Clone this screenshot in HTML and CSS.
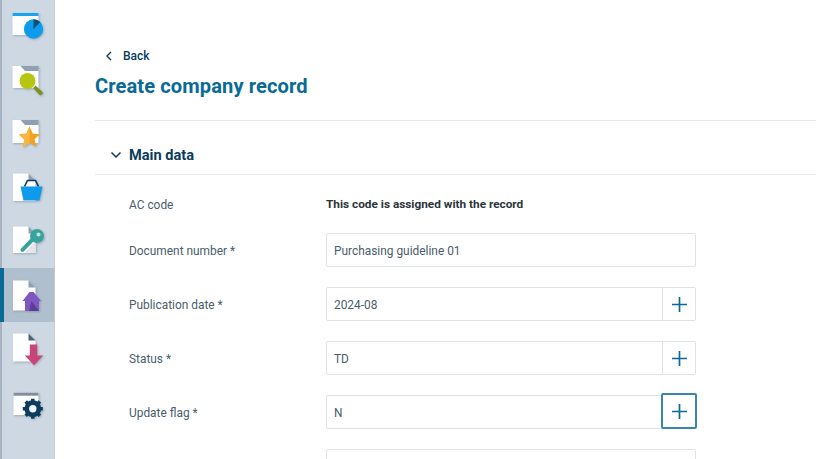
FILE: index.html
```html
<!DOCTYPE html>
<html lang="en">
<head>
<meta charset="utf-8">
<title>Create company record</title>
<link rel="stylesheet" href="styles.css">
</head>
<body>
<div class="app">
  <nav class="rail">
    <a class="rail-item">
      <svg class="ico" viewBox="0 0 36 34">
        <rect x="2.500" y="3" width="26" height="22" fill="#fff"/>
        <rect x="2.500" y="3" width="26" height="3" fill="#1aa3ef"/>
        <circle cx="23.500" cy="19" r="9.700" fill="#0f9bec"/>
        <path d="M23.500 19V9.300a9.700 9.700 0 0 1 6.800 2.800z" fill="#0b4f78"/>
      </svg>
    </a>
    <a class="rail-item">
      <svg class="ico" viewBox="0 0 36 34">
        <path d="M2.500 3h9l3 3h14v19h-26z" fill="#fff"/>
        <path d="M10.500 3h18v5H15z" fill="#8fa1b1"/>
        <path d="M23 25l2.500-2.500 6.500 6a2 2 0 0 1-3 3z" fill="#7d9221"/>
        <circle cx="17.500" cy="18" r="8" fill="#b6c612"/>
      </svg>
    </a>
    <a class="rail-item">
      <svg class="ico" viewBox="0 0 36 34">
        <path d="M2.500 3h9l3 3h14v20h-26z" fill="#fff"/>
        <path d="M10.500 3h18v5H15z" fill="#8fa1b1"/>
        <path d="M19.500 9.500l3.200 7 7.300.7-5.400 5 1.600 7.500-6.700-3.900-6.700 3.900 1.600-7.500-5.400-5 7.300-.7z" fill="#f2a31e"/>
        <path d="M19.500 9.500v16.800l-6.700 3.900 1.600-7.500-5.400-5 7.300-.7z" fill="#f9b642"/>
      </svg>
    </a>
    <a class="rail-item">
      <svg class="ico" viewBox="0 0 36 34">
        <path d="M3 2.500h15.500l7 7v20.500H3z" fill="#fff"/>
        <path d="M18.500 2.500l7 7h-7z" fill="#8fa1b1"/>
        <path d="M14.500 15.500l3-6h8l3 6" stroke="#0b3c5d" stroke-width="1.600" fill="none"/>
        <path d="M10.500 15.500h22l-3 14h-16z" fill="#0f9bec"/>
      </svg>
    </a>
    <a class="rail-item">
      <svg class="ico" viewBox="0 0 36 34">
        <path d="M3 2.500h15.500l7 7v19.500H3z" fill="#fff"/>
        <path d="M14 29L25.500 17v12z" fill="#e3e7ea"/>
        <path d="M18.500 2.500l7 7h-7z" fill="#8fa1b1"/>
        <path d="M12.500 25.800L24 14" stroke="#37a39c" stroke-width="4" stroke-linecap="round"/>
        <circle cx="27" cy="12" r="7" fill="#37a39c"/>
        <circle cx="28.500" cy="10.500" r="2" fill="#bfe2df"/>
      </svg>
    </a>
    <a class="rail-item is-active">
      <svg class="ico" viewBox="0 0 36 34">
        <path d="M3 2.500h15.500l7 7v23H3z" fill="#fff"/>
        <path d="M18.500 2.500l7 7h-7z" fill="#8fa1b1"/>
        <path d="M19.500 14h4l7.500 9h-2v10h-14V23h-2.500z" fill="#7e57c2"/>
        <path d="M21.500 23l7.500 10h-10z" fill="#5b3d96"/>
      </svg>
    </a>
    <a class="rail-item">
      <svg class="ico" viewBox="0 0 36 34">
        <path d="M3 2.500h15.500l7 7v21H3z" fill="#fff"/>
        <path d="M18.500 2.500l7 7h-7z" fill="#4d6478"/>
        <path d="M19.800 13.600h7.400v11h6l-9.200 9.700-9.200-9.700h5z" fill="#c8457a"/>
      </svg>
    </a>
    <a class="rail-item">
      <svg class="ico" viewBox="0 0 36 34">
        <rect x="3.500" y="7.700" width="25" height="22.300" fill="#fff"/>
        <rect x="3.500" y="7.700" width="25" height="3" fill="#7f8f9e"/>
        <circle cx="22.800" cy="23.700" r="6.200" fill="none" stroke="#0b3c5d" stroke-width="4.500"/>
        <path class="teeth" d="M22.800 13.700v20M12.800 23.700h20M15.700 16.600l14.200 14.200M29.900 16.600L15.700 30.800"/>
        <circle cx="22.800" cy="23.700" r="3.700" fill="#f2f5f7"/>
      </svg>
    </a>
  </nav>
  <main class="content">
    <a class="back">
      <svg class="back-ico" viewBox="0 0 10 12"><path d="M7 2L3 6l4 4" fill="none" stroke="#0b3c5d" stroke-width="1.400"/></svg>
      <span>Back</span>
    </a>
    <h1 class="title">Create company record</h1>
    <section class="panel">
      <header class="panel-head">
        <svg class="chev" viewBox="0 0 12 8"><path d="M1.500 1.500L6 6l4.500-4.500" fill="none" stroke="#0b3c5d" stroke-width="1.500"/></svg>
        <h2>Main data</h2>
      </header>
      <div class="form">
        <div class="row row-static">
          <label>AC code</label>
          <strong>This code is assigned with the record</strong>
        </div>
        <div class="row">
          <label>Document number *</label>
          <div class="field"><span class="value">Purchasing guideline 01</span></div>
        </div>
        <div class="row">
          <label>Publication date *</label>
          <div class="field"><span class="value">2024-08</span><button class="add"><svg viewBox="0 0 16 16"><path d="M8 0v16M0 8h16"/></svg></button></div>
        </div>
        <div class="row">
          <label>Status *</label>
          <div class="field"><span class="value">TD</span><button class="add"><svg viewBox="0 0 16 16"><path d="M8 0v16M0 8h16"/></svg></button></div>
        </div>
        <div class="row">
          <label>Update flag *</label>
          <div class="field"><span class="value">N</span><button class="add is-focus"><svg viewBox="0 0 16 16"><path d="M8 0v16M0 8h16"/></svg></button></div>
        </div>
        <div class="row">
          <label></label>
          <div class="field"></div>
        </div>
      </div>
    </section>
  </main>
</div>
</body>
</html>
```
FILE: styles.css
```css
* { box-sizing: border-box; }
html, body { margin: 0; height: 100%; overflow: hidden; background: #fff; }
body { font-family: Roboto, "Liberation Sans", sans-serif; font-size: 12px; color: #4a5d6c; }
.app { display: flex; height: 459px; overflow: hidden; }

.rail { flex: 0 0 55px; display: flex; flex-direction: column; background: #cdd8e2; border-left: 2px solid #a6b2c0; border-right: 1px solid #c2ccd6; }
.rail-item { flex: 0 0 53.6px; display: flex; align-items: center; justify-content: center; padding-right: 1px; position: relative; }
.rail-item.is-active { background: #b0bfcd; box-shadow: inset 2px 0 0 #0a6a96, -2px 0 0 #0a6a96; }
.ico { width: 36px; height: 34px; display: block; overflow: visible; filter: drop-shadow(1px 1px 1px rgba(70,90,110,.35)); }
.teeth { stroke: #0b3c5d; stroke-width: 3.500; fill: none; }

.content { flex: 1; padding-left: 40px; min-width: 0; }
.back { display: flex; align-items: center; height: 16px; margin-top: 48px; margin-left: 9px; font-size: 12px; font-weight: 500; color: #0b3c5d; }
.back-ico { width: 10px; height: 12px; margin-right: 9px; }
.title { margin: 10px 0 0; font-size: 20.100px; line-height: 24px; font-weight: 700; color: #0a6a96; letter-spacing: .1px; }

.panel { margin-top: 22px; border-top: 1.500px solid #e4e9ed; }
.panel-head { display: flex; align-items: center; height: 54px; border-bottom: 1px solid #e4e9ed; padding: 15px 0 0 15px; }
.chev { width: 12px; height: 8px; margin-right: 7px; }
.panel-head h2 { margin: 0; font-size: 14.600px; font-weight: 700; color: #0b3c5d; }

.form { padding-left: 34px; }
.row { display: flex; align-items: center; height: 34px; margin-bottom: 20px; }
.row-static { height: 18px; margin-top: 21px; margin-bottom: 19px; }
.row label { flex: 0 0 197px; padding-top: 2px; font-size: 11.900px; color: #4a5d6c; }
.row-static label { padding-top: 0; }
.row strong { margin-top: -2px; font-size: 11.800px; font-weight: 700; color: #2a343b; }

.field { display: flex; align-items: stretch; width: 370px; height: 34px; border: 1px solid #dde3e8; border-radius: 2px; background: #fff; }
.value { flex: 1; display: flex; align-items: center; padding: 2px 0 0 7px; font-size: 11.900px; color: #4a5d6c; }
.add { flex: 0 0 33px; padding: 0; display: flex; align-items: center; justify-content: center; background: #fff; border: 0; border-left: 1px solid #dde3e8; }
.add svg { width: 15px; height: 15px; fill: none; stroke: #0a6a96; stroke-width: 1.800; }
.add.is-focus { flex-basis: 36px; height: 36px; margin: -3px -2px -1px 0; border: 2px solid #3a85aa; border-radius: 2px; }
```
